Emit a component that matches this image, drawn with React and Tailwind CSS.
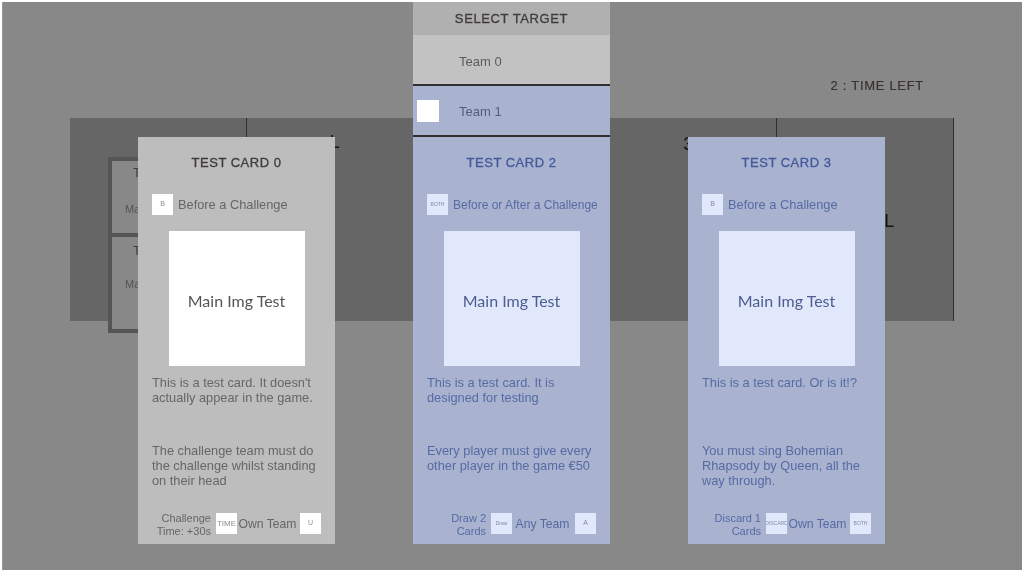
const GREY = {
  card: 'bg-[#bdbdbd]',
  title: 'text-[#3f3b3a]',
  text: 'text-[#666666]',
  tile: 'bg-white',
  tileText: 'text-[#8c8c8c]',
  image: 'bg-white',
  imageText: 'text-[#555555]',
};

const BLUE = {
  card: 'bg-[#a9b3d0]',
  title: 'text-[#43599a]',
  text: 'text-[#566aa3]',
  tile: 'bg-[#e2e8fc]',
  tileText: 'text-[#7f89ad]',
  image: 'bg-[#e2e8fc]',
  imageText: 'text-[#4d5d8f]',
};

const TILE_SIZE = {
  B: 'text-[7px]',
  U: 'text-[7px]',
  A: 'text-[7px]',
  TIME: 'text-[8px]',
  BOTH: 'text-[5px]',
  Draw: 'text-[5px]',
  DISCARD: 'text-[5px]',
};

const CARDS = [
  {
    title: 'TEST CARD 0',
    theme: GREY,
    whenIcon: 'B',
    when: 'Before a Challenge',
    whenSize: 'text-[12.8px]',
    desc: "This is a test card. It doesn't actually appear in the game.",
    effect: 'The challenge team must do the challenge whilst standing on their head',
    reward: ['Challenge', 'Time: +30s'],
    rewardIcon: 'TIME',
    target: 'Own Team',
    targetIcon: 'U',
  },
  {
    title: 'TEST CARD 2',
    theme: BLUE,
    whenIcon: 'BOTH',
    when: 'Before or After a Challenge',
    whenSize: 'text-[12px]',
    desc: 'This is a test card. It is designed for testing',
    effect: 'Every player must give every other player in the game €50',
    reward: ['Draw 2', 'Cards'],
    rewardIcon: 'Draw',
    target: 'Any Team',
    targetIcon: 'A',
  },
  {
    title: 'TEST CARD 3',
    theme: BLUE,
    whenIcon: 'B',
    when: 'Before a Challenge',
    whenSize: 'text-[12.8px]',
    desc: 'This is a test card. Or is it!?',
    effect: 'You must sing Bohemian Rhapsody by Queen, all the way through.',
    reward: ['Discard 1', 'Cards'],
    rewardIcon: 'DISCARD',
    target: 'Own Team',
    targetIcon: 'BOTH',
  },
];

function Tile({ label, theme }) {
  return (
    <div className={`w-[21px] h-[21px] shrink-0 flex items-center justify-center overflow-hidden whitespace-nowrap ${TILE_SIZE[label]} ${theme.tile} ${theme.tileText}`}>
      {label}
    </div>
  );
}

function Card({ card }) {
  const { theme } = card;
  return (
    <div className={`w-[197px] h-[407px] flex flex-col ${theme.card}`}>
      <h2 className={`mt-[18px] h-4 text-center text-[13px] leading-4 font-normal tracking-[0.5px] [-webkit-text-stroke:0.3px] ${theme.title}`}>
        {card.title}
      </h2>

      <div className="mt-[23px] ml-[14px] flex items-center gap-[5px]">
        <Tile label={card.whenIcon} theme={theme} />
        <span className={`${card.whenSize} whitespace-nowrap ${theme.text}`}>{card.when}</span>
      </div>

      <div className={`mt-4 mx-auto w-[136px] h-[135px] pt-1 flex items-center justify-center text-[16px] font-['Lato',sans-serif] ${theme.image} ${theme.imageText}`}>
        Main Img Test
      </div>

      <p className={`mt-[9px] px-[14px] h-[68px] text-[12.8px] leading-[15px] ${theme.text}`}>{card.desc}</p>
      <p className={`px-[14px] h-[60px] text-[12.8px] leading-[15px] ${theme.text}`}>{card.effect}</p>

      <div className="mt-[6px] flex items-center">
        <div className={`w-[73px] mr-[5px] pt-[3px] text-right text-[11px] leading-[13px] ${theme.text}`}>
          {card.reward.map(line => <div key={line}>{line}</div>)}
        </div>
        <Tile label={card.rewardIcon} theme={theme} />
        <span className={`w-[63px] pr-[2px] pt-px text-center text-[12.2px] whitespace-nowrap ${theme.text}`}>{card.target}</span>
        <Tile label={card.targetIcon} theme={theme} />
      </div>
    </div>
  );
}

function SelectTarget() {
  return (
    <div className="w-[197px] flex flex-col text-[13px] text-[#5c5c5c]">
      <div className="h-[33px] bg-[#b0b0b0] flex items-center justify-center text-[13px] tracking-[0.6px] text-[#3f3b3a] [-webkit-text-stroke:0.3px]">
        SELECT TARGET
      </div>
      <div className="h-[49px] bg-[#c2c2c2] flex items-center pt-[5px] pl-[46px]">Team 0</div>
      <div className="h-[2px] bg-[#2f2f2f]" />
      <div className="h-[49px] bg-[#a9b3d0] flex items-center pl-1 gap-[20px] text-[#555d7c]">
        <div className="w-[22px] h-[22px] bg-white" />
        <span className="pt-[2px]">Team 1</span>
      </div>
      <div className="h-[2px] bg-[#2f2f2f]" />
    </div>
  );
}

function Board() {
  return (
    <div className="ml-[67px] w-[884px] h-[203px] bg-[#666666] grid grid-cols-5 grid-rows-[203px] text-[18px] leading-6 text-[#111111] font-['Liberation_Sans',sans-serif]">
      <div className="border-r border-[#2f2f2f] pl-[38px] pt-[39px]">
        <div className="w-[150px] h-[176px] border-4 border-[#555555] bg-[#888888] flex flex-col divide-y-4 divide-[#555555] text-[#3f3f3f]">
          <div className="h-[76px] pl-[21px] text-[13px]">
            <div>TEST</div>
            <div className="-ml-2 mt-[12px] text-[11px] text-[#555555]">Main</div>
          </div>
          <div className="flex-1 pl-[21px] pt-[2px] text-[13px]">
            <div>TEST</div>
            <div className="-ml-2 mt-[9px] text-[11px] text-[#555555]">Main</div>
          </div>
        </div>
      </div>
      <div className="pl-[83px] pt-[12px]">L</div>
      <div />
      <div className="border-r border-[#2f2f2f] pt-[14px] text-center">3</div>
      <div className="border-r border-[#2f2f2f] pl-[107px] pt-[91px]">L</div>
    </div>
  );
}

export default function App() {
  return (
    <div className="w-[1024px] h-[573px] overflow-hidden bg-white pt-[2px] pb-[3px] pl-[2px] pr-[2px] font-['Liberation_Sans',sans-serif] blur-[0.6px]">
      <div className="relative h-full bg-[#888888] border-l border-[#999999]">
        <div className="h-[116px] flex justify-end items-start pt-[77px] pr-[98px] text-[13px] leading-[14px] tracking-[0.7px] text-[#383330] [-webkit-text-stroke:0.2px]">
          2 : TIME LEFT
        </div>
        <Board />

        {/* Card picker overlay */}
        <div className="absolute inset-0 flex items-end gap-[78px] pl-[135px] pb-[26px]">
          <Card card={CARDS[0]} />
          <div className="flex flex-col">
            <SelectTarget />
            <Card card={CARDS[1]} />
          </div>
          <Card card={CARDS[2]} />
        </div>
      </div>
    </div>
  );
}
